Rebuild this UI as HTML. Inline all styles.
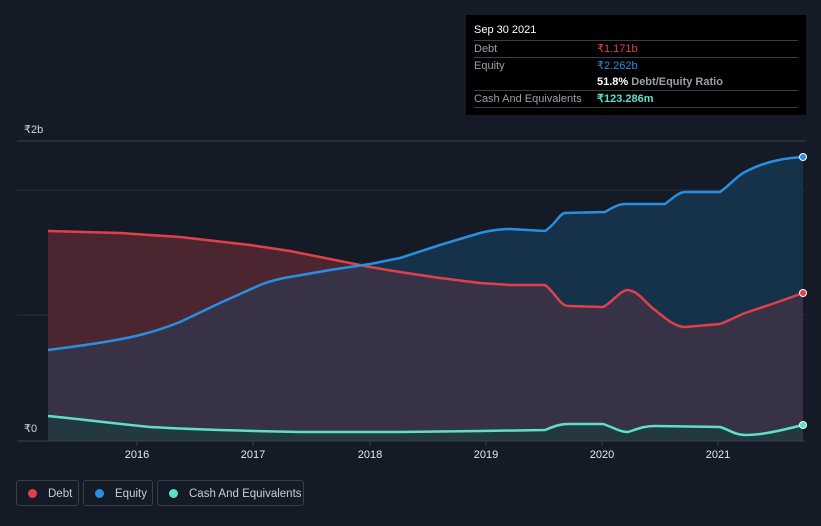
<!DOCTYPE html>
<html><head><meta charset="utf-8"><style>
html,body{margin:0;width:821px;height:526px;overflow:hidden}
body{background:#151b26;font-family:"Liberation Sans",sans-serif;position:relative}
.tip{position:absolute;left:466px;top:15px;width:340px;height:100px;background:#000;color:#fff;font-size:11px}
.row{position:absolute;left:8px;right:8px;border-top:1px solid #3a3f47;height:17px;line-height:17px;color:#9aa0a8}
.row span{position:absolute;left:123px}
.leg{position:absolute;top:480px;height:26px;border:1px solid #3a3f47;border-radius:3px;color:#c8ccd2;font-size:11.5px;line-height:26px;box-sizing:border-box;white-space:nowrap}
.leg i{display:inline-block;width:9px;height:9px;border-radius:50%;margin:0 11px 0 11px;vertical-align:-1px}
</style></head><body>
<svg width="821" height="526" style="position:absolute;left:0;top:0">
<defs>
<clipPath id="eq"><path d="M48,350 C80,346 120,340 140,335 C160,330 180,322 180,322 L220,303 L260,285 C275,279 290,277 290,277 L330,270 L370,264 L400,258 L440,245 L480,233 C495,229 510,229 510,229 L545,231 C555,225 560,213 565,213 L605,212 C615,206 620,204 625,204 L665,204 C675,196 680,192 685,192 L720,192 C730,185 738,175 745,172 C760,164 780,158 803,157 L803,441 L48,441Z"/></clipPath>
</defs>
<line x1="17" y1="141" x2="805" y2="141" stroke="#3a3f47"/>
<line x1="17" y1="190" x2="805" y2="190" stroke="#2a303a"/>
<line x1="17" y1="315" x2="805" y2="315" stroke="#2a303a"/>
<path d="M48,350 C80,346 120,340 140,335 C160,330 180,322 180,322 L220,303 L260,285 C275,279 290,277 290,277 L330,270 L370,264 L400,258 L440,245 L480,233 C495,229 510,229 510,229 L545,231 C555,225 560,213 565,213 L605,212 C615,206 620,204 625,204 L665,204 C675,196 680,192 685,192 L720,192 C730,185 738,175 745,172 C760,164 780,158 803,157 L803,441 L48,441Z" fill="#16314a"/>
<path d="M48,231 L120,233 L180,237 L250,245 L290,251 L330,259 L370,267 L400,272 L440,278 L480,283 L510,285 L545,285 C555,292 560,306 568,306 L603,307 C612,303 620,290 628,290 C640,292 645,303 655,310 C665,318 675,327 685,327 L720,324 C730,320 738,316 745,313 L775,303 L803,293 L803,441 L48,441Z" fill="#4b2530"/>
<path clip-path="url(#eq)" d="M48,231 L120,233 L180,237 L250,245 L290,251 L330,259 L370,267 L400,272 L440,278 L480,283 L510,285 L545,285 C555,292 560,306 568,306 L603,307 C612,303 620,290 628,290 C640,292 645,303 655,310 C665,318 675,327 685,327 L720,324 C730,320 738,316 745,313 L775,303 L803,293 L803,441 L48,441Z" fill="#383246"/>
<path d="M48,416 C80,419 100,422 150,427 C200,430 250,431 300,432 L400,432 L480,431 L545,430 C555,426 560,424 568,424 L603,424 C615,428 620,432 628,432 C640,428 645,426 655,426 L720,427 C730,430 735,435 745,435 C760,435 775,432 803,425 L803,441 L48,441Z" fill="#24393f"/>
<path d="M48,231 L120,233 L180,237 L250,245 L290,251 L330,259 L370,267 L400,272 L440,278 L480,283 L510,285 L545,285 C555,292 560,306 568,306 L603,307 C612,303 620,290 628,290 C640,292 645,303 655,310 C665,318 675,327 685,327 L720,324 C730,320 738,316 745,313 L775,303 L803,293" fill="none" stroke="#e0404a" stroke-width="2.5"/>
<path d="M48,350 C80,346 120,340 140,335 C160,330 180,322 180,322 L220,303 L260,285 C275,279 290,277 290,277 L330,270 L370,264 L400,258 L440,245 L480,233 C495,229 510,229 510,229 L545,231 C555,225 560,213 565,213 L605,212 C615,206 620,204 625,204 L665,204 C675,196 680,192 685,192 L720,192 C730,185 738,175 745,172 C760,164 780,158 803,157" fill="none" stroke="#2a8fe0" stroke-width="2.5"/>
<path d="M48,416 C80,419 100,422 150,427 C200,430 250,431 300,432 L400,432 L480,431 L545,430 C555,426 560,424 568,424 L603,424 C615,428 620,432 628,432 C640,428 645,426 655,426 L720,427 C730,430 735,435 745,435 C760,435 775,432 803,425" fill="none" stroke="#5ee0c8" stroke-width="2.5"/>
<line x1="17" y1="441" x2="805" y2="441" stroke="#3a3f47"/>
<g stroke="#3a3f47"><line x1="137" y1="441" x2="137" y2="446"/><line x1="253" y1="441" x2="253" y2="446"/><line x1="370" y1="441" x2="370" y2="446"/><line x1="486" y1="441" x2="486" y2="446"/><line x1="602" y1="441" x2="602" y2="446"/><line x1="718" y1="441" x2="718" y2="446"/></g>
<circle cx="803" cy="293" r="3.5" fill="#e0404a" stroke="#fff" stroke-width="1"/>
<circle cx="803" cy="157" r="3.5" fill="#2a8fe0" stroke="#fff" stroke-width="1"/>
<circle cx="803" cy="425" r="3.5" fill="#5ee0c8" stroke="#fff" stroke-width="1"/>
<g fill="#e6e8eb" font-size="11" font-family="Liberation Sans,sans-serif" text-anchor="middle">
<text x="137" y="458">2016</text><text x="253" y="458">2017</text><text x="370" y="458">2018</text><text x="486" y="458">2019</text><text x="602" y="458">2020</text><text x="718" y="458">2021</text>
</g>
<g fill="#d0d3d8" font-size="11" font-family="Liberation Sans,sans-serif"><text x="24" y="133">₹2b</text><text x="24" y="432">₹0</text></g>
</svg>
<div class="tip">
<div style="position:absolute;left:8px;top:9px;font-size:11px">Sep 30 2021</div>
<div class="row" style="top:25px">Debt<span style="color:#e0404a">₹1.171b</span></div>
<div class="row" style="top:42px">Equity<span style="color:#2a8fe0">₹2.262b</span></div>
<div class="row" style="top:59px;border-top:none"><span style="color:#fff;font-weight:bold">51.8% <b style="color:#9aa0a8">Debt/Equity Ratio</b></span></div>
<div class="row" style="top:75px">Cash And Equivalents<span style="color:#5ee0c8;font-weight:bold">₹123.286m</span></div>
<div class="row" style="top:92px;height:0"></div>
</div>
<div class="leg" style="left:16px;width:63px"><i style="background:#e0404a"></i>Debt</div>
<div class="leg" style="left:83px;width:70px"><i style="background:#2a8fe0"></i>Equity</div>
<div class="leg" style="left:157px;width:147px"><i style="background:#5ee0c8"></i>Cash And Equivalents</div>
</body></html>
